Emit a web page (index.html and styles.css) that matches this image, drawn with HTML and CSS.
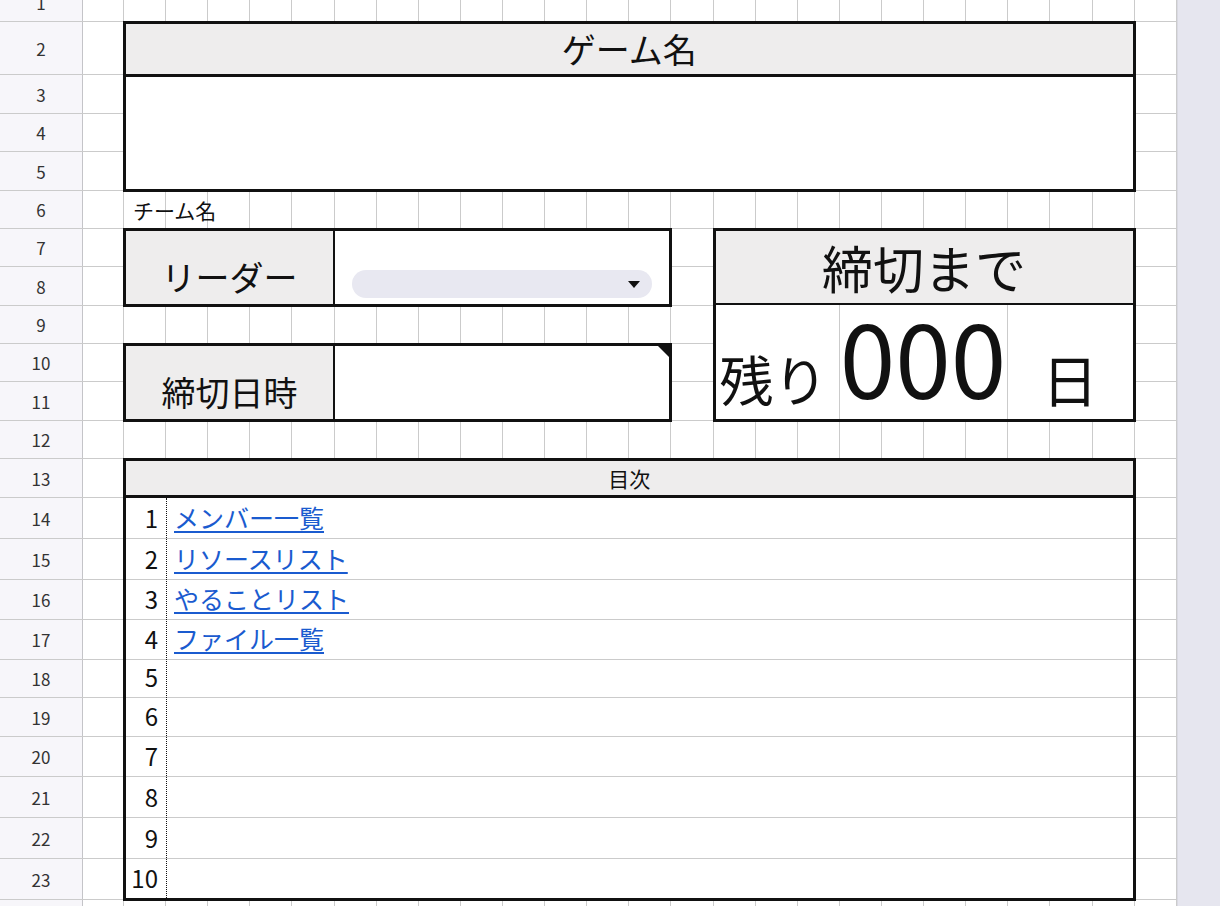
FILE: index.html
```html
<!DOCTYPE html>
<html lang="ja">
<head>
    <meta charset="UTF-8">
    <meta name="viewport" content="width=device-width, initial-scale=1.0">
    <title>ゲーム制作 管理シート</title>
    <link rel="stylesheet" href="styles.css">
</head>
<body>
    <div class="page">
        <div class="sheet">
            <!-- column grid lines -->
            <div class="cols">
                <i></i><i></i><i></i><i></i><i></i><i></i><i></i><i></i><i></i><i></i>
                <i></i><i></i><i></i><i></i><i></i><i></i><i></i><i></i><i></i><i></i>
                <i></i><i></i><i></i><i></i><i></i><i></i><i></i>
            </div>

            <!-- row headers + row lines -->
            <div class="rows">
                <div class="row"><span class="num">1</span></div>
                <div class="row"><span class="num">2</span></div>
                <div class="row"><span class="num">3</span></div>
                <div class="row"><span class="num">4</span></div>
                <div class="row"><span class="num">5</span></div>
                <div class="row"><span class="num">6</span></div>
                <div class="row"><span class="num">7</span></div>
                <div class="row"><span class="num">8</span></div>
                <div class="row"><span class="num">9</span></div>
                <div class="row"><span class="num">10</span></div>
                <div class="row"><span class="num">11</span></div>
                <div class="row"><span class="num">12</span></div>
                <div class="row"><span class="num">13</span></div>
                <div class="row"><span class="num">14</span></div>
                <div class="row"><span class="num">15</span></div>
                <div class="row"><span class="num">16</span></div>
                <div class="row"><span class="num">17</span></div>
                <div class="row"><span class="num">18</span></div>
                <div class="row"><span class="num">19</span></div>
                <div class="row"><span class="num">20</span></div>
                <div class="row"><span class="num">21</span></div>
                <div class="row"><span class="num">22</span></div>
                <div class="row"><span class="num">23</span></div>
                <div class="row"><span class="num"></span></div>
            </div>

            <!-- merged cells and bordered blocks -->
            <div class="boxes">
                <section class="box game">
                    <div class="box-head">ゲーム名</div>
                    <div class="box-body"></div>
                </section>

                <div class="team">チーム名</div>

                <section class="box field leader">
                    <div class="field-label">リーダー</div>
                    <div class="field-value">
                        <div class="select"><span class="caret"></span></div>
                    </div>
                </section>

                <section class="box field deadline">
                    <div class="field-label">締切日時</div>
                    <div class="field-value has-note"></div>
                </section>

                <section class="box countdown">
                    <div class="countdown-head">締切まで</div>
                    <div class="countdown-body">
                        <span class="cd-left">残り</span>
                        <span class="cd-num">000</span>
                        <span class="cd-unit">日</span>
                    </div>
                </section>

                <section class="box toc">
                    <div class="box-head toc-head">目次</div>
                    <ol class="toc-list">
                        <li><span class="toc-no">1</span><a href="#">メンバー一覧</a></li>
                        <li><span class="toc-no">2</span><a href="#">リソースリスト</a></li>
                        <li><span class="toc-no">3</span><a href="#">やることリスト</a></li>
                        <li><span class="toc-no">4</span><a href="#">ファイル一覧</a></li>
                        <li><span class="toc-no">5</span></li>
                        <li><span class="toc-no">6</span></li>
                        <li><span class="toc-no">7</span></li>
                        <li><span class="toc-no">8</span></li>
                        <li><span class="toc-no">9</span></li>
                        <li><span class="toc-no">10</span></li>
                    </ol>
                </section>
            </div>
        </div>
        <div class="scrollbar"></div>
    </div>
</body>
</html>
```

FILE: styles.css
```css
:root {
    --cols: 83px 41px repeat(25, 42.12px);
    --rows: 22px 53px 39px 38px 39px 38px 38px 39px 38px 38px 39px 38px 39px 41px 41px 40px 40px 38px 39px 40px 41px 41px 41px 40px;
    --grid-line: #cbcbcb;
    --head-bg: #eeeded;
    --ink: #111;
}

body {
    margin: 0;
    font-family: "Noto Sans CJK JP", "Noto Sans", sans-serif;
    color: var(--ink);
    background-color: #fff;
    overflow: hidden;
}

.page {
    display: flex;
    height: 906px;
    overflow: hidden;
}

.sheet {
    display: grid;
    width: 1177px;
    flex: none;
    align-self: flex-start;
}

.cols,
.rows,
.boxes {
    grid-area: 1 / 1;
    display: grid;
}

/* column lines */
.cols {
    grid-template-columns: var(--cols);
}

.cols i {
    border-right: 1px solid var(--grid-line);
}

/* row lines and row numbers */
.rows {
    grid-template-rows: var(--rows);
}

.row {
    display: flex;
    border-bottom: 1px solid var(--grid-line);
}

.row:first-child {
    margin-top: -17px;
}

.num {
    width: 83px;
    box-sizing: border-box;
    display: flex;
    align-items: center;
    justify-content: center;
    background-color: #f7f6fa;
    border-right: 1px solid #c4c4c8;
    font-size: 17px;
    color: #333;
}

/* bordered blocks */
.boxes {
    grid-template-columns: var(--cols);
    grid-template-rows: var(--rows);
}

.box {
    margin: -1px;
    border: 3px solid var(--ink);
    background-color: #fff;
    display: flex;
    flex-direction: column;
    min-width: 0;
    min-height: 0;
}

.box-head {
    flex: none;
    display: flex;
    align-items: center;
    justify-content: center;
    background-color: var(--head-bg);
    border-bottom: 3px solid var(--ink);
    line-height: 1;
}

.box-body {
    flex: 1;
}

.game {
    grid-row: 2 / 6;
    grid-column: 3 / 27;
}

.game .box-head {
    height: 50px;
    font-size: 34px;
}

.team {
    grid-row: 6;
    grid-column: 3 / 6;
    display: flex;
    align-items: flex-end;
    padding: 0 0 8px 9px;
    font-size: 21px;
    line-height: 1;
    white-space: nowrap;
}

/* label + value fields */
.field {
    display: grid;
    grid-template-columns: 209px 1fr;
}

.leader {
    grid-row: 7 / 9;
    grid-column: 3 / 16;
}

.deadline {
    grid-row: 10 / 12;
    grid-column: 3 / 16;
}

.field-label {
    display: flex;
    align-items: flex-end;
    justify-content: center;
    padding-bottom: 10px;
    background-color: var(--head-bg);
    border-right: 2px solid var(--ink);
    font-size: 34px;
    line-height: 1;
}

.field-value {
    position: relative;
    display: flex;
    align-items: flex-end;
}

.select {
    flex: 1;
    height: 28px;
    margin: 0 17px 6px;
    padding-right: 12px;
    border-radius: 14px;
    background-color: #e8e8f1;
    display: flex;
    align-items: center;
    justify-content: flex-end;
}

.caret {
    width: 0;
    height: 0;
    border-left: 6.5px solid transparent;
    border-right: 6.5px solid transparent;
    border-top: 7px solid var(--ink);
}

.has-note::after {
    content: "";
    position: absolute;
    top: -1px;
    right: -1px;
    border-top: 13px solid var(--ink);
    border-left: 13px solid transparent;
}

/* days-left counter */
.countdown {
    grid-row: 7 / 12;
    grid-column: 17 / 27;
}

.countdown-head {
    height: 74px;
    flex: none;
    display: flex;
    align-items: flex-end;
    justify-content: center;
    padding-bottom: 10px;
    box-sizing: border-box;
    background-color: var(--head-bg);
    border-bottom: 2px solid var(--ink);
    font-size: 51px;
    line-height: 1;
}

.countdown-body {
    flex: 1;
    display: grid;
    grid-template-columns: 124px 168px 1fr;
}

.countdown-body span {
    display: flex;
    align-items: flex-end;
    line-height: 1;
    white-space: nowrap;
}

.cd-left {
    padding: 0 0 13px 4px;
    border-right: 1px solid var(--grid-line);
    font-size: 54px;
}

.countdown-body .cd-num {
    justify-content: center;
    padding-bottom: 23px;
    border-right: 1px solid var(--grid-line);
    font-size: 100px;
    line-height: 0.8;
}

.cd-unit {
    justify-content: center;
    padding-bottom: 13px;
    font-size: 56px;
}

/* table of contents */
.toc {
    grid-row: 13 / 24;
    grid-column: 3 / 27;
}

.toc-head {
    height: 34px;
    font-size: 21px;
}

.toc-list {
    flex: 1;
    margin: 0;
    padding: 0;
    list-style: none;
    display: flex;
    flex-direction: column;
    position: relative;
}

.toc-list::before {
    content: "";
    position: absolute;
    top: 0;
    bottom: 0;
    left: 40px;
    border-left: 1px dotted var(--ink);
}

.toc-list li {
    height: 41px;
    flex: none;
    box-sizing: border-box;
    display: flex;
    align-items: flex-end;
    padding-bottom: 8px;
    border-bottom: 1px solid var(--grid-line);
    line-height: 1;
}

.toc-list li:nth-child(3),
.toc-list li:nth-child(4),
.toc-list li:nth-child(7) {
    height: 40px;
}

.toc-list li:nth-child(5) {
    height: 38px;
}

.toc-list li:nth-child(6) {
    height: 39px;
}

.toc-list li:last-child {
    flex: 1;
    border-bottom: none;
}

.toc-no {
    width: 41px;
    flex: none;
    box-sizing: border-box;
    padding-right: 9px;
    text-align: right;
    font-size: 24px;
}

.toc-list a {
    margin-left: 7px;
    font-size: 25px;
    color: #1a5bcf;
    text-decoration: underline;
    text-decoration-thickness: 1.5px;
    text-underline-offset: 3px;
    white-space: nowrap;
}

.scrollbar {
    flex: 1;
    background-color: #e6e6ef;
    border-left: 1px solid #d9d9e2;
}
```
